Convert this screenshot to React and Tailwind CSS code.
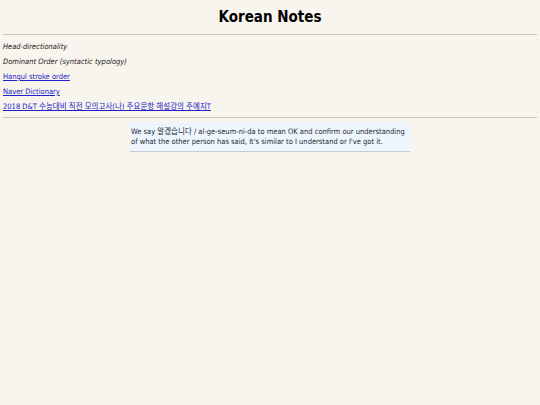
export default function App() {
  const font = { fontFamily: '"DejaVu Sans Condensed", "DejaVu Sans", Verdana, "Noto Sans CJK KR", sans-serif' };
  return (
    <div
      className="min-h-[405px] w-[540px] bg-[#f8f5ee] px-[3px] text-[#1a1a1a]"
      style={font}
    >
      <h1 className="pt-[8px] pb-[8px] text-center text-[15px] font-bold leading-[18px] text-black">
        Korean Notes
      </h1>
      <hr className="border-t border-[#c9c6c2]" />

      <ul className="flex flex-col gap-[5px] pt-[7px] text-[7.5px] leading-[10px]">
        <li className="italic">Head-directionality</li>
        <li className="italic">Dominant Order (syntactic typology)</li>
        <li>
          <a href="#" className="text-[#2222c4] underline">Hangul stroke order</a>
        </li>
        <li>
          <a href="#" className="text-[#2222c4] underline">Naver Dictionary</a>
        </li>
        <li>
          <a href="#" className="text-[#2222c4] underline">2018 D&amp;T 수능대비 직전 모의고사(나) 주요문항 해설강의 주예지T</a>
        </li>
      </ul>

      <hr className="mt-[5px] border-t border-[#c9c6c2]" />

      <div className="mx-auto mt-[4px] w-[280px] border-b border-[#c5cbd3] bg-[#eef5fc] px-[1px] pt-[5px] pb-[4px] text-[7.5px] leading-[10px] text-[#1c2a3a]">
        We say 알겠습니다 / al-ge-seum-ni-da to mean OK and confirm our understanding of what the other person has said, It's similar to I understand or I've got it.
      </div>
    </div>
  );
}
